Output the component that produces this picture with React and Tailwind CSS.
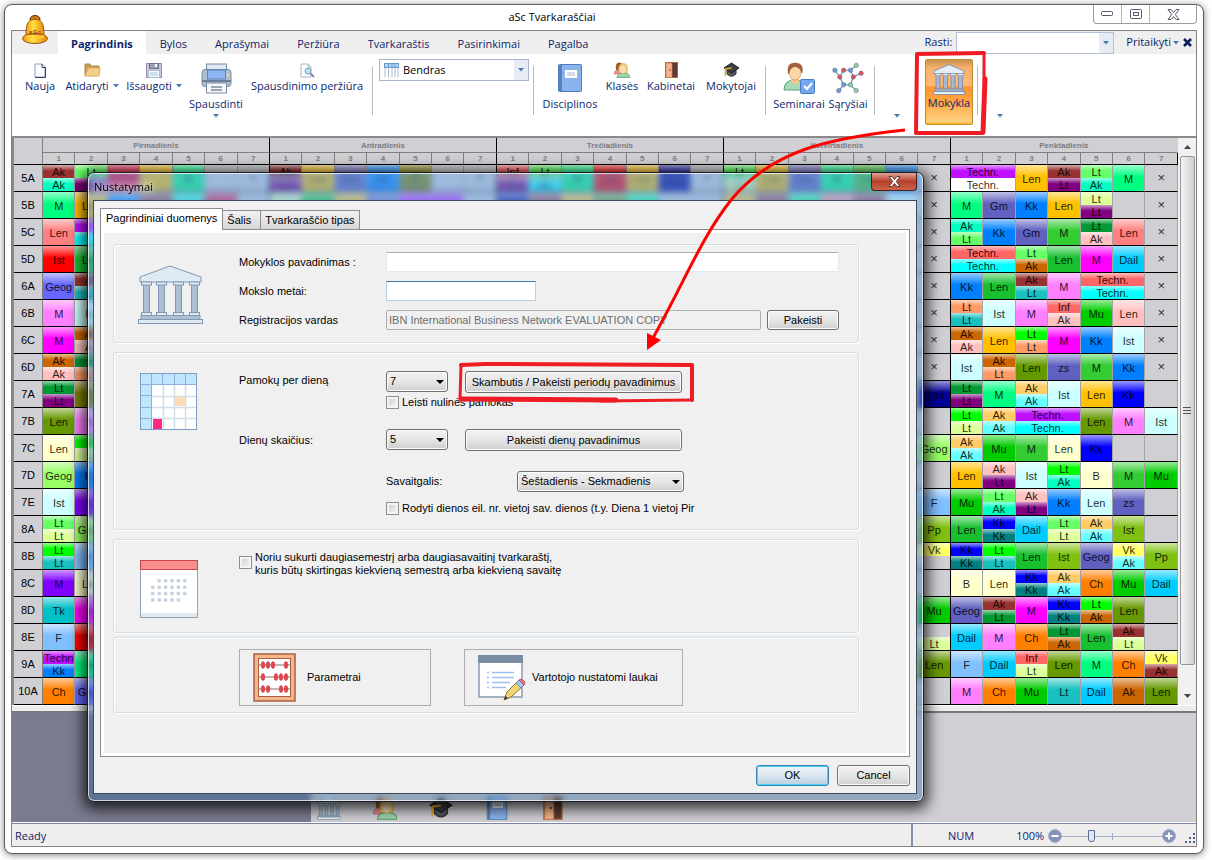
import React, { useState } from 'react';

const tints = {
  brown: 'bg-[#993333]',
  mint: 'bg-[#00ffc0]',
  lime: 'bg-[#66ff66]',
  plum: 'bg-[#800080]',
  spring: 'bg-[#00ff80]',
  amber: 'bg-[#ffc000]',
  coral: 'bg-[#ff8080]',
  red: 'bg-[#ff0000]',
  leaf: 'bg-[#18c030]',
  indigo: 'bg-[#6666ff]',
  pink: 'bg-[#ff80ff]',
  ice: 'bg-[#ccffff]',
  magenta: 'bg-[#ff00ff]',
  rust: 'bg-[#cc6600]',
  blush: 'bg-[#ffc0c0]',
  forest: 'bg-[#009933]',
  olive: 'bg-[#808000]',
  moss: 'bg-[#669900]',
  cream: 'bg-[#ffffcc]',
  pistachio: 'bg-[#99ff66]',
  azure: 'bg-[#0080ff]',
  violet: 'bg-[#8000ff]',
  straw: 'bg-[#ddff99]',
  vivid: 'bg-[#00ff00]',
  teal: 'bg-[#18c0c0]',
  lagoon: 'bg-[#00c0c8]',
  sky: 'bg-[#80c0ff]',
  purple: 'bg-[#c010ff]',
  orange: 'bg-[#ff8000]',
  grape: 'bg-[#6060c0]',
  grass: 'bg-[#33cc33]',
  cyan: 'bg-[#00ffff]',
  salmon: 'bg-[#ff6666]',
  emerald: 'bg-[#00cc00]',
  peach: 'bg-[#ff9966]',
  sand: 'bg-[#ffcc66]',
  aqua: 'bg-[#66ffff]',
  navy: 'bg-[#000099]',
  blue: 'bg-[#0000ff]',
  deepteal: 'bg-[#008080]',
  dail: 'bg-[#00ccff]',
  avocado: 'bg-[#80c010]',
  yellow: 'bg-[#ffff66]',
  crimson: 'bg-[#e6002e]',
  white: 'bg-white',
};

const days = ['Pirmadienis', 'Antradienis', 'Trečiadienis', 'Ketvirtadienis', 'Penktadienis'];
const periods = [1, 2, 3, 4, 5, 6, 7];

// 'Name tint' is a lesson, '|' splits a cell between groups, '2*' spans two periods,
// 'x' is a blocked period and a number is that many free periods
const timetable = [
  ['5A', 'Ak brown|Ak mint', 'Lt lime|Lt plum', ' crimson', ' amber', 'M spring', 1, 'x',
    'Ak brown|Lt plum', 'Len amber', 'Gm grape', 'Kk azure', 'T olive', 1, 'x',
    'Inf salmon|Lt plum', 'Lt lime|Ak cyan', 'M spring', 'Ist red', 'Len amber', 'Dail navy', 'x',
    'Lt lime|Lt straw', 'Len amber', 'Gm grape', 'M spring', 'Len grass', 'Kk azure', 'x',
    '2*Techn. purple|Techn. white', 'Len amber', 'Ak brown|Lt plum', 'Lt lime|Ak mint', 'M spring', 'x'],
  ['5B', 'M spring', 'Len amber', ' azure', ' brown', ' mint', ' crimson', 1,
    ' straw', ' emerald', ' amber', ' grape', '2* purple', 1,
    ' navy', ' brown', ' amber', ' moss', ' spring', 2,
    ' amber', ' brown', ' spring', ' coral', ' brown', ' ice', 'x',
    'M spring', 'Gm grape', 'Kk azure', 'Len amber', 'Lt straw|Lt plum', 1, 'x'],
  ['5C', 'Len coral', '2* purple| cyan', 24, 'x', 'Ak mint|Lt lime', 'Kk azure', 'Gm grape', 'M grass', 'Lt forest|Ak blush', 'Len coral', 'x'],
  ['5D', 'Ist red', 'Len leaf', 25, 'x', '2*Techn. salmon|Techn. cyan', 'Lt lime|Ak rust', 'Len leaf', 'M magenta', 'Dail dail', 'x'],
  ['6A', 'Geog indigo', 'Ak brown|Lt teal', 25, 'x', 'Kk azure', 'Len leaf', 'Ak brown|Lt teal', 'M pink', '2*Techn. salmon|Techn. cyan', 'x'],
  ['6B', 'M pink', 'Ist ice', 25, 'x', 'Lt peach|Lt teal', 'Ist ice', 'M pink', 'Inf salmon|Ak blush', 'Mu emerald', 'Len blush', 'x'],
  ['6C', 'M magenta', 'Ak rust|Ak blush', 25, 'x', 'Ak rust|Ak blush', 'Len amber', 'Lt vivid|Lt peach', 'M magenta', 'Kk azure', 'Ist ice', 'x'],
  ['6D', 'Ak rust|Ak blush', 'Lt forest|Lt peach', 25, 'x', 'Ist ice', 'Ak rust|Lt peach', 'Len moss', 'zs grape', 'M grass', 'Kk azure', 'x'],
  ['7A', 'Lt forest|Lt plum', 'T olive', 25, 'Dail navy', 'Lt forest|Lt plum', 'M spring', 'Ak sand|Ak aqua', 'Ist ice', 'Len amber', 'Kk blue', 1],
  ['7B', 'Len moss', 'M pink', 25, 1, 'Lt vivid|Lt straw', 'Ak sand|Ak aqua', '2*Techn. purple|Techn. cyan', 'Len moss', 'M pink', 'Ist ice'],
  ['7C', 'Len cream', 'Lt vivid|Lt straw', 25, 'Geog pistachio', 'Ak sand|Ak aqua', 'Mu emerald', 'M grass', 'Len cream', 'Kk blue', 1, 1],
  ['7D', 'Geog pistachio', 'Kk azure', 25, 1, 'Len amber', 'Ak blush|Lt plum', 'Ist ice', 'Lt vivid|Ak mint', 'B cream', 'M grass', 'Mu emerald'],
  ['7E', 'Ist ice', 'M violet', 25, 'F sky', 'Mu emerald', 'Lt lime|Ak mint', 'Ak blush|Lt plum', 'Kk azure', 'Len ice', 'zs grape', 1],
  ['8A', 'Lt lime|Lt straw', 'Geog pistachio', 25, 'Pp avocado', 'Len leaf', 'Kk blue|Kk deepteal', 'Dail dail', 'Lt lime|Lt straw', 'Ak sand|Ak aqua', 'Ist avocado', 1],
  ['8B', 'Lt vivid|Lt teal', 'F sky', 25, 'Vk yellow|', 'Kk blue|Kk deepteal', 'Lt vivid|Lt teal', 'Len leaf', 'Ist avocado', 'Geog grape', 'Vk yellow|Ak aqua', 'Pp avocado'],
  ['8C', 'M violet', 'Len cream', 25, 1, 'B cream', 'Len cream', 'Kk blue|Kk deepteal', 'Ak sand|Ak aqua', 'Ch orange', 'Mu emerald', 'Dail dail'],
  ['8D', 'Tk lagoon', 'M magenta', 25, 'Mu emerald', 'Geog grape', 'Ak brown|Lt forest', 'M magenta', 'Kk blue|Kk deepteal', 'Lt vivid|Ak rust', 'Len moss', 1],
  ['8E', 'F sky', 'Ist red', 25, '|Lt straw', 'Dail dail', 'M pink', 'Ch orange', 'Lt forest|Ak rust', 'Len leaf', 'Ak brown|Lt straw', 1],
  ['9A', 'Techn purple|Kk azure', 'M spring', 25, 'Len moss', 'F sky', 'Dail dail', 'Inf salmon|Lt straw', 'Len moss', 'M spring', 'Ch orange', 'Vk yellow|Ak brown'],
  ['10A', 'Ch orange', 'Geog indigo', 25, 1, 'M pink', 'Ch orange', 'Mu emerald', 'Lt teal', 'Dail dail', 'Ak rust', 'Len moss'],
];

/* ---------- icons ---------- */

const BellIcon = () => (
  <svg width="28" height="30" viewBox="0 0 28 30">
    <defs>
      <linearGradient id="bell" x1="0" x2="1">
        <stop offset="0" stopColor="#f59a10" />
        <stop offset="0.4" stopColor="#ffe14a" />
        <stop offset="1" stopColor="#e88a00" />
      </linearGradient>
    </defs>
    <ellipse cx="14" cy="4" rx="5" ry="3.500" fill="#c9761a" stroke="#5c2c06" />
    <path d="M5 21C5 8 7 4.500 14 4.500S23 8 23 21z" fill="url(#bell)" stroke="#a55a08" />
    <ellipse cx="14" cy="23.500" rx="12.500" ry="5" fill="url(#bell)" stroke="#a04e10" />
    <path d="M5 20q9 5 18 0v2q-9 4-18 0z" fill="#ffcf38" />
    <text x="14" y="20" textAnchor="middle" fontSize="7" fontWeight="bold" fill="#b0501a" fontFamily="Liberation Sans, sans-serif">aSc</text>
  </svg>
);

const PageIcon = () => (
  <svg width="12" height="15" viewBox="0 0 12 15">
    <path d="M1 1h7l3 3v10H1z" fill="#fdfeff" stroke="#8ea0bb" />
    <path d="M8 1v3.500h3M11.500 4v10.500H1" fill="none" stroke="#2b446e" />
  </svg>
);

const FolderIcon = () => (
  <svg width="17" height="14" viewBox="0 0 17 14">
    <path d="M1 13V1h5l1 2h8v3" fill="#c89b58" stroke="#b48748" />
    <path d="M1 13L4 5h12l-1 8z" fill="#f5cf86" stroke="#d9aa5c" />
  </svg>
);

const FloppyIcon = () => (
  <svg width="16" height="15" viewBox="0 0 16 15">
    <rect x="0.500" y="0.500" width="15" height="14" fill="#cfc0e0" stroke="#9a8bb2" />
    <rect x="3.500" y="0.500" width="9" height="5" fill="#98a1b6" stroke="#6d7690" />
    <rect x="9" y="1" width="2" height="3" fill="#fff" />
    <rect x="2.500" y="7.500" width="11" height="7" fill="#f4fafd" stroke="#a8bccd" />
    <path d="M4 10h8M4 12h8" stroke="#9fc7de" />
  </svg>
);

const PrinterIcon = () => (
  <svg width="31" height="31" viewBox="0 0 31 31">
    <rect x="5.500" y="1" width="20" height="9" fill="#dfe9f2" stroke="#7c8ca0" />
    <rect x="1" y="6.500" width="29" height="17" rx="3" fill="#aebfd4" stroke="#7b8da6" />
    <rect x="6.500" y="7" width="18" height="9" fill="#8db6f2" stroke="#5d80b8" />
    <path d="M1 18h29" stroke="#6e7f98" strokeWidth="2" />
    <rect x="5.500" y="20" width="20" height="10" fill="#f5f7fa" stroke="#7c8ca0" />
    <path d="M10 24h11M10 27h11" stroke="#9aa5b4" strokeWidth="2" />
    <circle cx="27" cy="12" r="1.200" fill="#f7e27a" />
  </svg>
);

const PreviewIcon = () => (
  <svg width="15" height="15" viewBox="0 0 15 15">
    <path d="M1 1h7l3 3v10H1z" fill="#fbfdff" stroke="#a9b6c6" />
    <path d="M8 1v3h3" fill="none" stroke="#a9b6c6" />
    <circle cx="8" cy="8" r="3" fill="#b9e2f7" stroke="#7f9fb8" />
    <path d="M10.500 10.500l3.500 3.500" stroke="#7e8ea6" strokeWidth="2" />
  </svg>
);

const SheetIcon = () => (
  <svg width="15" height="15" viewBox="0 0 15 15">
    <path d="M1 4v10.500M4.500 4v10.500M8 4v10.500M11 4v10.500M14 4v10.500" stroke="#a9bccb" />
    <rect x="0.500" y="0.500" width="14" height="4" fill="#a9d8fa" stroke="#6f9ac8" />
    <path d="M4.500 1v3M8 1v3M11 1v3" stroke="#6f9ac8" />
  </svg>
);

const BookIcon = ({ size = 'h-7' }) => (
  <svg className={size} viewBox="0 0 24 28">
    <rect x="0.500" y="0.500" width="23" height="27" rx="1" fill="#8bb4ee" stroke="#4e7db8" />
    <rect x="1" y="1" width="3" height="26" fill="#5583bd" />
    <rect x="7" y="6" width="12" height="8" fill="#fff" />
    <path d="M9 9h8M9 11h8" stroke="#a8b8cc" />
  </svg>
);

const PeopleIcon = ({ size = 'h-4' }) => (
  <svg className={size} viewBox="0 0 16 16">
    <path d="M0 12q0-4 5-4l3 4z" fill="#f08a92" stroke="#c85a68" strokeWidth="0.500" />
    <path d="M2 8Q1 0 5.500 0.500T8 8z" fill="#a3563a" />
    <path d="M3 15.500q0-4.500 6.500-4.500t6.500 4.500z" fill="#9fd6ab" stroke="#4f9a68" strokeWidth="0.700" />
    <path d="M5 11Q3 2 9 1.500T13 11z" fill="#f0cd75" stroke="#c79d4a" strokeWidth="0.500" />
    <ellipse cx="9" cy="7.500" rx="2.700" ry="3.700" fill="#fbdcb6" />
  </svg>
);

const DoorIcon = ({ size = 'h-4' }) => (
  <svg className={size} viewBox="0 0 13 16">
    <rect x="0.500" y="0.500" width="12" height="15" fill="#5d3b34" stroke="#a46a48" />
    <path d="M1 1h5l1 1v13.500H1z" fill="#f4b58c" stroke="#c98055" strokeWidth="0.700" />
    <circle cx="5" cy="8" r="0.800" fill="#7a4528" />
  </svg>
);

const HatIcon = ({ size = 'h-4' }) => (
  <svg className={size} viewBox="0 0 17 16">
    <path d="M4 6v6q4.500 4.500 9 0V6z" fill="#55585e" stroke="#33363b" />
    <path d="M8.500 1L16 6l-7.500 5L1 6z" fill="#3a3d42" stroke="#222" />
    <path d="M8.500 6L2.500 7v7" fill="none" stroke="#e8a62c" strokeWidth="1.500" />
  </svg>
);

const SeminarIcon = () => (
  <svg width="32" height="32" viewBox="0 0 32 32">
    <path d="M1 28q0-10 11-10t12 10z" fill="#a9dbb6" stroke="#5f9f74" />
    <path d="M8 14h8v6l-4 3-4-3z" fill="#f0c48c" />
    <ellipse cx="12" cy="10" rx="6" ry="8" fill="#fbd9a6" stroke="#c99558" strokeWidth="0.700" />
    <path d="M5.500 12Q3 1 12 1t7 10q-2-6-7-6.500Q7 5 5.500 12z" fill="#a5623a" stroke="#7e4524" strokeWidth="0.500" />
    <rect x="17.500" y="17.500" width="14" height="14" rx="1" fill="#74a7ee" stroke="#4c7cc0" />
    <path d="M21 24l3 3 5-6" fill="none" stroke="#fff" strokeWidth="2" />
  </svg>
);

const atoms = [
  ['#6a9be0', 3, 8], ['#e0525c', 12, 8], ['#6a9be0', 19, 8], ['#8ccf9a', 25, 3], ['#e0525c', 30, 11], ['#e0525c', 8, 15],
  ['#e0525c', 22, 15], ['#6a9be0', 12, 23], ['#8ccf9a', 19, 23], ['#6a9be0', 7, 29], ['#8ccf9a', 25, 29],
];

const MoleculeIcon = () => (
  <svg width="32" height="32" viewBox="0 0 33 32">
    <path d="M12 8h7l6-5M19 8l3 7-3 8h-7l-4-8 4-7M22 15l8-4M3 8l5 7M12 23l-5 6M19 23l6 6" fill="none" stroke="#7286a0" strokeWidth="1.200" />
    {atoms.map(([fill, cx, cy]) => (
      <circle key={`${cx}-${cy}`} cx={cx} cy={cy} r="2.300" fill={fill} stroke="#5b6a82" strokeWidth="0.500" />
    ))}
  </svg>
);

const BankIcon = ({ size = 'h-[60px]' }) => (
  <svg className={size} viewBox="0 0 65 60">
    <path d="M32 1L63 12v5H2v-5z" fill="#dfeaf2" stroke="#8098b5" />
    {[5, 20, 37, 53].map((x) => (
      <g key={x} stroke="#8098b5">
        <rect x={x + 0.5} y="19" width="6" height="29" fill="#aebfd4" />
        <rect x={x - 1.5} y="17" width="10" height="3" fill="#dfeaf2" />
        <rect x={x - 1.5} y="47.500" width="10" height="3" fill="#dfeaf2" />
      </g>
    ))}
    <rect x="3" y="50.500" width="59" height="4" fill="#aebfd4" stroke="#8098b5" />
    <rect x="0.500" y="54.500" width="64" height="4" fill="#dfeaf2" stroke="#8098b5" />
  </svg>
);

// Bolder strokes than BankIcon so that it holds up at toolbar size
const SmallBankIcon = ({ size = 'h-[31px]' }) => (
  <svg className={size} viewBox="0 0 32 31">
    <path d="M16 0.500L31 7v2.500H1V7z" fill="#e4eef5" stroke="#8298b2" />
    {[3, 10.5, 18, 25.5].map((x) => (
      <g key={x}>
        <rect x={x} y="10" width="4" height="15" fill="#a9bace" stroke="#758aa6" strokeWidth="0.800" />
        <rect x={x - 0.5} y="9.500" width="5" height="2" fill="#e4eef5" stroke="#758aa6" strokeWidth="0.500" />
      </g>
    ))}
    <rect x="2" y="25" width="28" height="2.500" fill="#9fb2c9" stroke="#758aa6" strokeWidth="0.600" />
    <rect x="0.500" y="27.500" width="31" height="3" fill="#e4eef5" stroke="#758aa6" strokeWidth="0.800" />
  </svg>
);

const WeekGridIcon = () => (
  <svg width="58" height="58" viewBox="0 0 58 58">
    <rect x="0.500" y="0.500" width="56" height="56" fill="#fff" />
    <path d="M23.500 12v45M34.500 12v45M45.500 12v45M12 23.500h45M12 34.500h45M12 45.500h45" stroke="#cfdfea" strokeWidth="1.500" />
    <rect x="0.500" y="0.500" width="56" height="11" fill="#bfe6ff" />
    <rect x="0.500" y="0.500" width="11" height="56" fill="#bfe6ff" />
    <path d="M11.500 0v57M0 11.500h57M0 22.500h11.500M0 34.500h11.500M0 45.500h11.500M22.500 0v11.500M34.500 0v11.500M45.500 0v11.500" stroke="#8db0d8" />
    <rect x="0.500" y="0.500" width="56" height="56" fill="none" stroke="#7f9cc4" />
    <rect x="35" y="24" width="10" height="9" fill="#ffdcb8" />
    <rect x="13" y="46" width="9" height="10" fill="#ff2a84" />
  </svg>
);

const dotRows = [[1, 2, 3, 4, 5], [0, 1, 2, 3, 4, 5], [0, 1, 2, 3, 4, 5], [0, 1, 2, 3, 4]];

const CalendarIcon = () => (
  <svg width="58" height="58" viewBox="0 0 58 58">
    <rect x="0.500" y="0.500" width="57" height="57" fill="#fff" stroke="#93a3b5" />
    <rect x="1" y="53" width="56" height="4" fill="#dfeaf0" />
    <rect x="0.500" y="0.500" width="57" height="9" fill="#f78f8f" stroke="#c9484c" />
    {dotRows.map((row, y) => row.map((x) => (
      <rect key={`${x}-${y}`} x={11 + x * 6.4} y={19 + y * 6.4} width="3.500" height="3.500" rx="1" fill="#c5d3df" />
    )))}
  </svg>
);

const AbacusIcon = () => (
  <svg width="43" height="49" viewBox="0 0 43 49">
    <rect x="1" y="1" width="41" height="47" fill="#f5b68c" stroke="#a85f40" strokeWidth="1.500" />
    <rect x="5.500" y="5.500" width="32" height="38" fill="#fff" stroke="#a85f40" />
    {[[10, 15, 20, 33], [10, 23, 28, 33], [10, 15, 28, 33]].map((row, i) => (
      <g key={i}>
        <path d={`M6 ${12 + i * 12}h31`} stroke="#8a6f66" strokeWidth="1" />
        {row.map((x) => (
          <ellipse key={x} cx={x} cy={12 + i * 12} rx="1.800" ry="3.500" fill="#e8434c" stroke="#c23640" strokeWidth="0.500" />
        ))}
      </g>
    ))}
  </svg>
);

const FormIcon = () => (
  <svg width="48" height="46" viewBox="0 0 48 46">
    <rect x="1" y="1" width="43" height="41" fill="#fff" stroke="#a3b1c2" strokeWidth="2" />
    <rect x="0" y="0" width="45" height="8" fill="#7b8da3" />
    <path d="M14 17.500h22M14 22.500h22M14 27.500h18M14 32.500h14" stroke="#9cc0ee" strokeWidth="1.500" />
    <path d="M9 17.500h2M9 22.500h2M9 27.500h2M9 32.500h2" stroke="#9cc0ee" strokeWidth="1.500" />
    <path d="M26 45l3-8 11-11 5 5-12 11z" fill="#f2d675" stroke="#8a7033" />
    <path d="M38 28l3-3 5 5-3 3z" fill="#a9c9ee" stroke="#6584ab" />
    <path d="M41 25q2-2 4.500 0.500t0.500 4.500z" fill="#ef7f86" stroke="#b84a52" />
    <path d="M26 45l1.500-4 2.500 2z" fill="#333" />
  </svg>
);

const CaretIcon = () => (
  <svg width="6" height="4" viewBox="0 0 6 4"><path d="M0 0h6L3 3.500z" fill="#4a7ab5" /></svg>
);

/* ---------- ribbon ---------- */

const tabs = ['Pagrindinis', 'Bylos', 'Aprašymai', 'Peržiūra', 'Tvarkaraštis', 'Pasirinkimai', 'Pagalba'];

const Separator = ({ className }) => <span className={`mt-[12px] h-[49px] w-px shrink-0 bg-[#b9b9b9] ${className}`} />;

const SmallTool = ({ label, icon, caret, width }) => (
  <button className={`flex shrink-0 flex-col items-center self-start pt-[8px] ${width}`}>
    <span className="flex h-4 items-center">{icon}</span>
    <span className="flex items-center gap-1 whitespace-nowrap leading-[16px]">
      {label}
      {caret && <CaretIcon />}
    </span>
  </button>
);

const BigTool = ({ label, icon, caret, width }) => (
  <button className={`flex shrink-0 flex-col items-center self-start pt-[8px] ${width}`}>
    <span className="flex h-8 items-center">{icon}</span>
    <span className="mt-0.5 whitespace-nowrap leading-[16px]">{label}</span>
    {caret && <span className="mt-0.5"><CaretIcon /></span>}
  </button>
);

const TitleBar = () => (
  <header className="flex h-[25px] shrink-0 items-start justify-between">
    <h1 className="flex-1 self-center text-center text-[11px] text-black">aSc Tvarkaraščiai</h1>
    <div className="flex h-[19px] rounded-b border border-t-0 border-[#9c9c9c]">
      <button aria-label="Minimize" className="flex w-7 items-center justify-center border-r border-[#b5b5b5]">
        <svg width="13" height="6" viewBox="0 0 13 6"><rect x="0.500" y="0.500" width="11" height="4" rx="1" fill="#fff" stroke="#555a68" /></svg>
      </button>
      <button aria-label="Maximize" className="flex w-7 items-center justify-center border-r border-[#b5b5b5]">
        <svg width="12" height="10" viewBox="0 0 12 10">
          <rect x="0.500" y="0.500" width="11" height="9" rx="1" fill="#fff" stroke="#555a68" />
          <rect x="3.500" y="3.500" width="5" height="3" fill="#fff" stroke="#555a68" />
        </svg>
      </button>
      <button aria-label="Close" className="flex w-[46px] items-center justify-center">
        <svg width="13" height="11" viewBox="0 0 13 11">
          <path d="M1 0.500h3l2.500 3 2.500-3h3L8.300 5.500l3.700 5H9l-2.500-3-2.500 3H1l3.700-5z" fill="#fff" stroke="#555a68" />
        </svg>
      </button>
    </div>
  </header>
);

const RibbonTabs = () => (
  <div className="flex h-[23px] shrink-0 items-center justify-between bg-[#efefef] pl-[46px]">
    <nav className="flex h-full items-stretch">
      {tabs.map((tab, i) => (
        <button key={tab} className={i === 0 ? 'bg-white px-[13px] pt-1 font-bold' : 'px-[14px] pt-1'}>{tab}</button>
      ))}
    </nav>
    <div className="flex items-center pr-1">
      <label htmlFor="find" className="pr-1">Rasti:</label>
      <div className="flex h-[22px] border border-[#b4c0d4] bg-white">
        <input id="find" className="w-[142px] px-1 outline-none" />
        <button aria-label="Rasti sąrašas" className="flex w-3.5 items-center justify-center bg-[#e7ebf4]"><CaretIcon /></button>
      </div>
      <button className="ml-3 flex items-center gap-0.5">Pritaikyti <CaretIcon /></button>
      <button aria-label="Uždaryti" className="ml-1">
        <svg width="9" height="9" viewBox="0 0 9 9"><path d="M1 1l7 7M8 1L1 8" stroke="#0a1c56" strokeWidth="2.500" /></svg>
      </button>
    </div>
  </div>
);

const Toolbar = () => (
  <div className="flex h-[82px] shrink-0 items-start overflow-hidden bg-white pl-[5px]">
    <SmallTool label="Nauja" icon={<PageIcon />} width="w-[46px]" />
    <SmallTool label="Atidaryti" icon={<FolderIcon />} width="w-[58px]" caret />
    <SmallTool label="Išsaugoti" icon={<FloppyIcon />} width="w-[66px]" caret />
    <BigTool label="Spausdinti" icon={<PrinterIcon />} width="w-[58px]" caret />
    <SmallTool label="Spausdinimo peržiūra" icon={<PreviewIcon />} width="w-[124px]" />
    <Separator className="ml-[3px]" />
    <div className="ml-[6px] mt-[5px] flex h-[22px] w-[150px] shrink-0 items-center border border-[#a9b6ca]">
      <span className="px-1"><SheetIcon /></span>
      <input aria-label="Vaizdas" defaultValue="Bendras" className="w-0 flex-1 text-black outline-none" />
      <button aria-label="Vaizdų sąrašas" className="flex h-full w-3.5 items-center justify-center bg-[#e7ebf4]"><CaretIcon /></button>
    </div>
    <Separator className="ml-[4px]" />
    <BigTool label="Disciplinos" icon={<BookIcon />} width="ml-px w-[70px]" />
    <SmallTool label="Klasės" icon={<PeopleIcon />} width="w-[34px]" />
    <SmallTool label="Kabinetai" icon={<DoorIcon />} width="w-[64px]" />
    <SmallTool label="Mokytojai" icon={<HatIcon />} width="w-[56px]" />
    <Separator className="ml-[6px]" />
    <BigTool label="Seminarai" icon={<SeminarIcon />} width="ml-1 w-[58px]" />
    <BigTool label="Sąryšiai" icon={<MoleculeIcon />} width="w-[40px]" />
    <Separator className="ml-[6px]" />
    <span className="ml-[19px] mt-[60px]"><CaretIcon /></span>
    <button className="ml-[25px] mt-[5px] flex h-[66px] w-12 shrink-0 flex-col items-center rounded-xs border border-[#c38a36] bg-[linear-gradient(#c98f4e,#f6b070_12%,#ffb877_40%,#ff9430_42%,#ffa640_65%,#ffd88c)] pt-[3px] shadow-[inset_0_-1px_2px_#ffb000]">
      <span className="flex h-8 items-center"><SmallBankIcon /></span>
      <span className="leading-[16px]">Mokykla</span>
    </button>
    <Separator className="ml-[4px]" />
    <span className="ml-[19px] mt-[60px]"><CaretIcon /></span>
  </div>
);

/* ---------- timetable ---------- */

const Lesson = ({ text, half }) => {
  const [name, tint] = text.split(' ');
  const height = half ? 'h-[13px] leading-[14px]' : 'h-[26px] leading-[28px]';
  const fill = tint ? `${tints[tint]} bg-linear-to-b from-white/60 to-transparent to-45%` : '';
  return <div className={`overflow-hidden text-center text-black/85 ${height} ${fill}`}>{name}</div>;
};

const Cell = ({ value, last }) => {
  const edge = last ? 'border-r-black' : 'border-r-[#a2a2a8]';
  const base = `border-b border-r border-b-black p-0 ${edge}`;
  if (typeof value === 'number') return <td colSpan={value} className={base} />;
  if (value === 'x') return <td className={`${base} text-center text-[13px] leading-[20px] text-black/80`}>×</td>;
  const span = value.startsWith('2*') ? 2 : 1;
  const parts = value.replace('2*', '').split('|');
  return (
    <td colSpan={span} className={base}>
      {parts.map((part, i) => <Lesson key={i} text={part} half={parts.length > 1} />)}
    </td>
  );
};

const Row = ({ row }) => {
  const [name, ...cells] = row;
  let column = 0;
  return (
    <tr className="h-[27px]">
      <th className="border-b border-r border-b-black border-r-[#808080] p-0 pt-px font-normal">{name}</th>
      {cells.map((value, i) => {
        column += typeof value === 'number' ? value : value.startsWith('2*') ? 2 : 1;
        return <Cell key={i} value={value} last={column % 7 === 0 && column < 35} />;
      })}
    </tr>
  );
};

const Timetable = () => (
  <div className="flex shrink-0 border-2 border-b-0 border-r-0 border-[#8a8a8a] bg-[#cfcfd4]">
    <table className="w-full min-w-0 flex-1 table-fixed border-separate border-spacing-0 overflow-hidden font-['Liberation_Sans',Arial,sans-serif] text-[11px] text-black">
      <colgroup>
        <col className="w-[29px]" />
        {days.map((day) => periods.map((p) => <col key={day + p} />))}
      </colgroup>
      <thead className="text-[8px] text-[#7d7d82]">
        <tr className="h-[15px]">
          <th rowSpan={2} className="border-b border-r border-b-black border-r-[#808080] p-0" />
          {days.map((day) => (
            <th key={day} colSpan={7} className="border-b border-r border-b-[#808080] border-r-black p-0 pt-px leading-[13px] last:border-r-transparent">{day}</th>
          ))}
        </tr>
        <tr className="h-[12px]">
          {days.map((day) => periods.map((p) => (
            <th key={day + p} className={`border-b border-r border-b-black p-0 pt-px leading-[10px] ${p === 7 ? 'border-r-black' : 'border-r-[#808080]'}`}>{p}</th>
          )))}
        </tr>
      </thead>
      <tbody>
        {timetable.map((row) => <Row key={row[0]} row={row} />)}
      </tbody>
    </table>
    <div className="flex w-[18px] flex-col items-center bg-[#f1f1f1] px-px">
      <button aria-label="Aukštyn" className="flex h-[18px] items-center"><svg width="7" height="4" viewBox="0 0 7 4"><path d="M0 4h7L3.500 0z" fill="#444" /></svg></button>
      <div className="flex w-[15px] flex-1 flex-col items-center justify-center gap-0.5 rounded-xs border border-[#979797] bg-linear-to-r from-[#f4f4f4] to-[#cfcfd4]">
        <span className="h-px w-2 bg-[#555]" />
        <span className="h-px w-2 bg-[#555]" />
        <span className="h-px w-2 bg-[#555]" />
      </div>
      <button aria-label="Žemyn" className="mb-0.5 mt-6 flex h-3.5 items-center"><svg width="7" height="4" viewBox="0 0 7 4"><path d="M0 0h7L3.500 4z" fill="#444" /></svg></button>
    </div>
  </div>
);

const BottomPanel = () => (
  <div className="flex min-h-[111px] flex-1 border-t-2 border-[#77777d]">
    <div className="w-[299px] bg-[#7b7b90]" />
    <div className="flex flex-1 items-end gap-8 bg-[#cfcfd4] pb-0.5 pl-1.5">
      <SmallBankIcon size="h-6 w-6" />
      <PeopleIcon size="h-6 w-6" />
      <HatIcon size="h-6 w-6" />
      <BookIcon size="h-6 w-6" />
      <DoorIcon size="h-6 w-6" />
    </div>
  </div>
);

const StatusBar = () => {
  const [zoom, setZoom] = useState(28);
  return (
    <footer className="mt-px flex h-[23px] shrink-0 items-stretch border-t border-[#7a86a8] bg-[#f0eded]">
      <span className="flex flex-1 items-center pl-[3px] pt-0.5">Ready</span>
      <div className="flex w-[285px] items-center border-l-2 border-[#8390ad] pl-[35px] pt-0.5">
        <span>NUM</span>
        <label htmlFor="zoom" className="ml-[42px] mr-1">100%</label>
        <button aria-label="Mažinti">
          <svg width="14" height="14" viewBox="0 0 14 14"><circle cx="7" cy="7" r="6.500" fill="#8494b8" stroke="#a8b3cc" /><path d="M3.500 7h7" stroke="#fff" strokeWidth="2" /></svg>
        </button>
        <input
          id="zoom"
          type="range"
          value={zoom}
          onChange={(e) => setZoom(e.target.value)}
          className="h-3.5 w-[100px] appearance-none bg-[linear-gradient(#9fadc8,#9fadc8),linear-gradient(#9fadc8,#9fadc8)] bg-[length:100%_1px,1px_7px] bg-center bg-no-repeat [&::-webkit-slider-thumb]:h-3 [&::-webkit-slider-thumb]:w-[7px] [&::-webkit-slider-thumb]:appearance-none [&::-webkit-slider-thumb]:rounded-b-[3px] [&::-webkit-slider-thumb]:border [&::-webkit-slider-thumb]:border-[#5b6d94] [&::-webkit-slider-thumb]:bg-[#dfe6f3]"
        />
        <button aria-label="Didinti">
          <svg width="14" height="14" viewBox="0 0 14 14"><circle cx="7" cy="7" r="6.500" fill="#8494b8" stroke="#a8b3cc" /><path d="M3.500 7h7M7 3.500v7" stroke="#fff" strokeWidth="2" /></svg>
        </button>
        <svg className="ml-auto mt-1.5" width="12" height="12" viewBox="0 0 12 12" fill="#4a6492">
          <path d="M9 0h2v2H9zM5 4h2v2H5zM9 4h2v2H9zM1 8h2v2H1zM5 8h2v2H5zM9 8h2v2H9z" />
        </svg>
      </div>
    </footer>
  );
};

/* ---------- settings dialog ---------- */

const buttonLook = 'rounded-[3px] border border-[#707070] bg-linear-to-b from-[#f2f2f2] via-[#e6e6e6] to-[#cfcfcf] shadow-[inset_0_0_0_1px_#fcfcfc]';

const Select = ({ id, label, options, width }) => (
  <div className={`relative ${width}`}>
    <select id={id} aria-label={label} className={`h-[21px] w-full appearance-none pl-[3px] pr-4 outline-none ${buttonLook}`}>
      {options.map((option) => <option key={option}>{option}</option>)}
    </select>
    <svg className="pointer-events-none absolute right-1 top-[9px]" width="8" height="4" viewBox="0 0 8 4"><path d="M0 0h8L4 4z" fill="#000" /></svg>
  </div>
);

const CheckBox = ({ id }) => (
  <input id={id} type="checkbox" className="size-[13px] shrink-0 appearance-none border border-[#8e8f8f] bg-linear-to-br from-[#c9cdd4] to-[#f8f8f8] shadow-[inset_0_0_0_2px_#f4f4f4] checked:bg-[#4a7ab5]" />
);

const Group = ({ icon, children, className }) => (
  <section className={`flex rounded-[3px] border border-[#d5dfe5] shadow-[1px_1px_0_#fff,inset_1px_1px_0_#fff] ${className}`}>
    <div className="flex w-[125px] shrink-0 justify-start pl-[24px] pt-[20px]">{icon}</div>
    <div className="min-w-0 flex-1">{children}</div>
  </section>
);

const dialogTabs = ['Pagrindiniai duomenys', 'Šalis', 'Tvarkaraščio tipas'];

const SettingsDialog = () => (
  <div
    role="dialog"
    aria-label="Nustatymai"
    className="absolute left-[87px] top-[172px] flex w-[837px] flex-col rounded-[7px] border border-[#1b1f27] bg-linear-to-b from-[#6ba3e4]/50 to-[#2f6696]/38 pb-[7px] pl-[5px] pr-1.5 font-['Liberation_Sans',Arial,sans-serif] text-[11px] text-black shadow-[0_3px_14px_4px_rgba(0,0,0,0.75),inset_0_0_0_1px_rgba(255,255,255,0.7)] backdrop-blur-[3px]"
  >
    <div className="flex h-[27px] items-start justify-between">
      <h2 className="pl-px font-['Open_Sans',sans-serif] text-[11px] leading-7 [text-shadow:0_0_6px_#fff,0_0_8px_#fff]">Nustatymai</h2>
      <button aria-label="Close" className="flex h-[18px] w-[46px] items-center justify-center rounded-b border border-t-0 border-[#4c1d18] bg-linear-to-b from-[#e0a193] via-[#b8402a] to-[#c9634a]">
        <svg width="13" height="11" viewBox="0 0 13 11">
          <path d="M1 0.500h3l2.500 3 2.500-3h3L8.300 5.500l3.700 5H9l-2.500-3-2.500 3H1l3.700-5z" fill="#fff" stroke="#5a3a3a" />
        </svg>
      </button>
    </div>

    <div className="flex flex-col border border-[#3b4a5c] bg-[#f0f0f0] px-1.5 pb-[7px] pt-[7px]">
      <div role="tablist" className="flex items-end">
        {dialogTabs.map((tab, i) => (
          <button
            key={tab}
            role="tab"
            aria-selected={i === 0}
            className={i === 0
              ? 'relative -mb-px h-[22px] border border-b-0 border-[#898c95] bg-white px-[5px] pb-0.5'
              : 'h-[19px] border border-b-0 border-l-0 border-[#898c95] bg-linear-to-b from-[#f2f2f2] to-[#d6d6d6] px-1 nth-2:w-[38px] nth-2:text-left'}
          >
            {tab}
          </button>
        ))}
      </div>

      <div className="border border-[#898c95] bg-white p-[3px]">
        <div className="flex flex-col bg-[#f0f0f0] pb-10 pl-[9px] pr-[47px] pt-[11px]">
          <Group icon={<BankIcon />} className="h-[99px]">
            <div className="grid grid-cols-[147px_1fr] items-center gap-y-[9px] pr-[19px] pt-[7px]">
              <label htmlFor="school">Mokyklos pavadinimas :</label>
              <input id="school" className="h-5 border border-[#e3e9ef] border-t-[#abadb3] bg-white px-1 outline-none" />
              <label htmlFor="year">Mokslo metai:</label>
              <input id="year" className="h-5 w-[150px] border border-[#b5cfe7] border-t-[#3d7bad] bg-white px-1 outline-none" />
              <label htmlFor="licence">Registracijos vardas</label>
              <div className="flex gap-1.5">
                <input id="licence" disabled defaultValue="IBN International Business Network EVALUATION COPY" className="h-5 min-w-0 flex-1 rounded-xs border border-[#afafaf] px-0.5 text-[#6d6d6d]" />
                <button className={`h-5 w-[72px] ${buttonLook}`}>Pakeisti</button>
              </div>
            </div>
          </Group>

          <Group icon={<span className="pl-[2px]"><WeekGridIcon /></span>} className="mt-[9px] h-[178px]">
            <div className="grid grid-cols-[147px_1fr] pt-[18px]">
              <label htmlFor="periods" className="leading-[18px]">Pamokų per dieną</label>
              <div>
                <div className="flex gap-[17px]">
                  <Select id="periods" options={['7', '6', '5']} width="w-[62px]" />
                  <button className={`h-[22px] w-[217px] ${buttonLook}`}>Skambutis / Pakeisti periodų pavadinimus</button>
                </div>
                <label className="flex items-center gap-[3px] pt-0.5 leading-[14px]" htmlFor="zero">
                  <CheckBox id="zero" />
                  Leisti nulinės pamokas
                </label>
              </div>
            </div>
            <div className="grid grid-cols-[147px_1fr] pt-[20px]">
              <label htmlFor="days" className="leading-[22px]">Dienų skaičius:</label>
              <div className="flex gap-[17px]">
                <Select id="days" options={['5', '6', '7']} width="w-[62px]" />
                <button className={`h-[22px] w-[217px] ${buttonLook}`}>Pakeisti dienų pavadinimus</button>
              </div>
            </div>
            <div className="pl-[147px] pt-[20px]">
              <div className="flex items-center">
                <label htmlFor="weekend" className="w-[131px]">Savaitgalis:</label>
                <Select id="weekend" options={['Šeštadienis - Sekmadienis']} width="w-[167px]" />
              </div>
              <label className="mt-[9px] flex items-center gap-[3px] whitespace-nowrap leading-[14px]" htmlFor="numbers">
                <CheckBox id="numbers" />
                Rodyti dienos eil. nr. vietoj sav. dienos (t.y. Diena 1 vietoj Pir
              </label>
            </div>
          </Group>

          <Group icon={<span className="pl-[2px]"><CalendarIcon /></span>} className="mt-[9px] h-[94px]">
            <label htmlFor="multi" className="flex gap-[3px] pt-[11px] leading-[13px]">
              <span className="pt-[5px]"><CheckBox id="multi" /></span>
              <span>
                Noriu sukurti daugiasemestrį arba daugiasavaitinį tvarkaraštį,
                <br />
                kuris būtų skirtingas kiekvieną semestrą arba kiekvieną savaitę
              </span>
            </label>
          </Group>

          <Group className="mt-1 h-[76px]">
            <div className="flex gap-[33px] pt-[11px]">
              <button className="flex h-[57px] w-[192px] items-center gap-[11px] border border-[#adadad] pl-[13px]">
                <AbacusIcon />
                Parametrai
              </button>
              <button className="flex h-[57px] w-[219px] items-center gap-1.5 border border-[#adadad] pl-[13px]">
                <FormIcon />
                Vartotojo nustatomi laukai
              </button>
            </div>
          </Group>
        </div>
      </div>

      <div className="flex justify-end gap-2 pt-2">
        <button className="h-[21px] w-[73px] rounded-[3px] border border-[#3c7fb1] bg-linear-to-b from-[#eef4f8] via-[#dbe8f0] to-[#b8cfdc] shadow-[inset_0_0_0_1px_#46d8fb]">OK</button>
        <button className={`h-[21px] w-[73px] ${buttonLook}`}>Cancel</button>
      </div>
    </div>
  </div>
);

// Red marker frames and the arrow from the ribbon button to the dialog button
const Markers = () => (
  <svg className="pointer-events-none absolute left-0 top-0" width="1212" height="860" viewBox="0 0 1212 860" fill="none">
    <g stroke="#ee1c25" strokeLinejoin="round" strokeLinecap="round">
      <path d="M917 55L916 133" strokeWidth="4" />
      <path d="M917 54L984 53" strokeWidth="4" />
      <path d="M984 54V80" strokeWidth="3" />
      <path d="M985 79L983 132" strokeWidth="5" />
      <path d="M918 133L983 133" strokeWidth="4" />
      <path d="M461 366L460 399" strokeWidth="3" />
      <path d="M461 365L485 364L691 365" strokeWidth="4" />
      <path d="M692 365V400" strokeWidth="4" />
      <path d="M461 399L616 400" strokeWidth="5" />
      <path d="M600 401L692 400" strokeWidth="3" />
    </g>
    <path d="M905 130C830 138 772 150 731 200C700 240 688 275 653 338" stroke="#f00" strokeWidth="3" />
    <path d="M647 350L647 333L661 340z" fill="#f00" />
  </svg>
);

const App = () => (
  <div className="relative flex min-h-screen bg-white pb-1.5 pl-1 pr-2 pt-1 font-['Open_Sans','Segoe_UI',sans-serif] text-[11px] text-[#0c1f6b]">
    <div className="flex flex-1 flex-col rounded-lg border border-[#5f5f5f] bg-white px-1.5 pb-1.5 shadow-[0_1px_7px_rgba(0,0,0,0.5)]">
      <TitleBar />
      <main className="flex min-w-0 flex-1 flex-col border border-[#828282]">
        <RibbonTabs />
        <Toolbar />
        <Timetable />
        <div className="h-[6px] shrink-0 border-t border-white bg-[#ececec]" />
        <BottomPanel />
        <StatusBar />
      </main>
    </div>
    {/* Application button hangs over the title bar and the ribbon */}
    <button aria-label="aSc" className="absolute left-[21px] top-[15px]"><BellIcon /></button>
    <SettingsDialog />
    <Markers />
  </div>
);

export default App;
